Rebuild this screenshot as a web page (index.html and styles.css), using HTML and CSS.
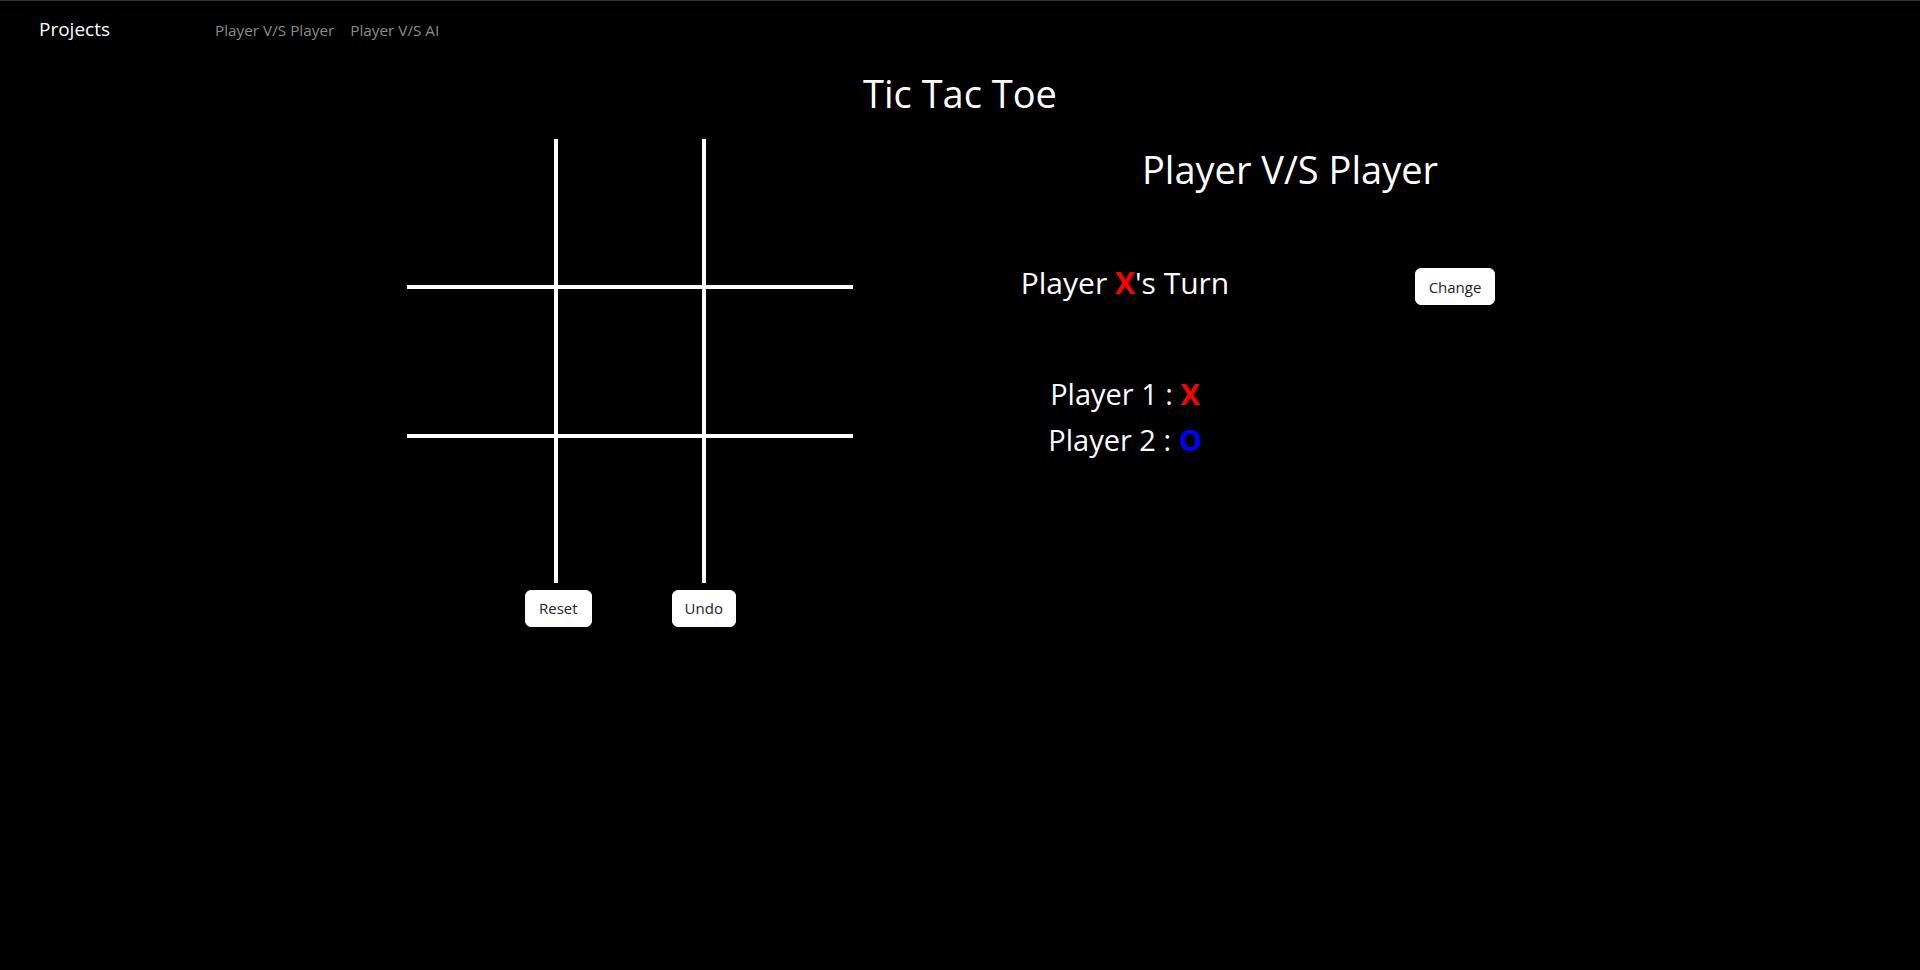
FILE: index.html
```html
<!DOCTYPE html>
<html lang="en">
<head>
<meta charset="utf-8">
<title>Tic Tac Toe</title>
<link rel="stylesheet" href="styles.css">
</head>
<body>
<nav class="navbar">
  <a class="brand" href="#">Projects</a>
  <div class="nav-links">
    <a class="nav-link" href="#">Player V/S Player</a>
    <a class="nav-link" href="#">Player V/S AI</a>
  </div>
</nav>
<h1 class="title">Tic Tac Toe</h1>
<main class="container">
  <section class="col-left">
    <div class="board">
      <div class="cell"></div><div class="cell"></div><div class="cell"></div>
      <div class="cell"></div><div class="cell"></div><div class="cell"></div>
      <div class="cell"></div><div class="cell"></div><div class="cell"></div>
    </div>
    <div class="board-actions">
      <button class="btn">Reset</button>
      <button class="btn btn-narrow">Undo</button>
    </div>
  </section>
  <section class="col-right">
    <h2 class="mode-title">Player V/S Player</h2>
    <div class="turn-row">
      <h3 class="turn-text">Player <span class="x-mark">X</span>'s Turn</h3>
      <div class="turn-action"><button class="btn">Change</button></div>
    </div>
    <div class="players">
      <div class="player-line">Player 1 : <span class="x-mark">X</span></div>
      <div class="player-line">Player 2 : <span class="o-mark">O</span></div>
    </div>
  </section>
</main>
</body>
</html>
```
FILE: styles.css
```css
* { box-sizing: border-box; }

body {
  margin: 0;
  min-height: 970px;
  background: #000;
  color: #fff;
  font-family: "Open Sans", "Noto Sans", sans-serif;
  border-top: 1px solid #3a283a;
}

.navbar {
  display: flex;
  align-items: baseline;
  height: 55px;
  padding: 16px 0 0 39px;
}

.brand {
  font-size: 19px;
  line-height: 24px;
  color: #fff;
  text-decoration: none;
  margin-right: 97px;
}

.nav-links { display: flex; }

.nav-link {
  font-size: 15.3px;
  line-height: 24px;
  color: #8c8c8c;
  padding: 0 8px;
  text-decoration: none;
}

.title {
  margin: 15px 0 0;
  font-size: 38px;
  font-weight: 400;
  line-height: 1.2;
  text-align: center;
}

.container {
  width: 1320px;
  margin: 0 auto;
  display: flex;
}

.col-left, .col-right { width: 660px; }

.col-left {
  display: flex;
  flex-direction: column;
  align-items: center;
}

.board {
  margin-top: 22px;
  display: grid;
  grid-template-columns: 147px 144px 147px;
  grid-template-rows: 146px 145px 145px;
  gap: 4px;
  background: #fff;
}

.cell { background: #000; }

.board-actions {
  width: 446px;
  display: flex;
  gap: 80px;
  padding-left: 118px;
  margin-top: 7px;
}

.btn {
  background: #fff;
  color: #212529;
  border: 1px solid #fff;
  border-radius: 6px;
  font-family: "Open Sans", "Noto Sans", sans-serif;
  font-size: 15px;
  line-height: 24px;
  padding: 5.5px 13px;
}

.btn-narrow { padding: 5.5px 12px; }

.mode-title {
  margin: 30px 0 0;
  font-size: 38px;
  font-weight: 400;
  line-height: 1.2;
  text-align: center;
}

.turn-row {
  display: flex;
  align-items: flex-start;
  margin-top: 73px;
}

.turn-text {
  width: 330px;
  margin: 0;
  font-size: 30px;
  font-weight: 400;
  line-height: 36px;
  text-align: center;
}

.turn-action {
  width: 330px;
  display: flex;
  justify-content: center;
  padding-top: 3px;
}

.x-mark { color: #f00; font-weight: 700; }
.o-mark { color: #00f; font-weight: 700; }

.players {
  width: 330px;
  margin-top: 66px;
  font-size: 29px;
  line-height: 45.7px;
  text-align: center;
}
```
